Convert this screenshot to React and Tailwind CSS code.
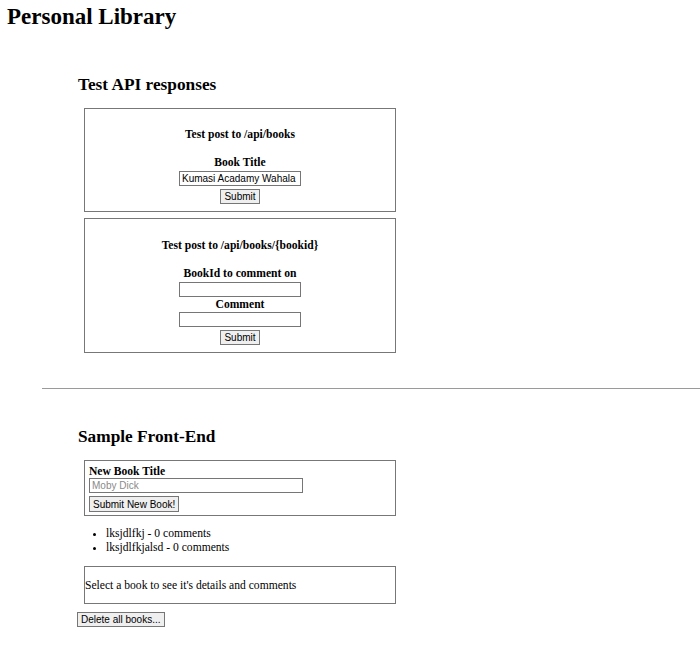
import { useState } from 'react';

const books = [
  { title: 'lksjdlfkj', commentcount: 0 },
  { title: 'lksjdlfkjalsd', commentcount: 0 },
];

const inputCls =
  "block h-[15px] border border-[#767676] bg-white px-[2px] text-[10px] leading-[13px] font-['Liberation_Sans',sans-serif] text-black outline-none placeholder:text-[#8a8a8a]";
const btnCls =
  "block h-[15px] border border-[#767676] bg-[#efefef] px-[3px] text-[10px] leading-[13px] font-['Liberation_Sans',sans-serif] text-black";

export default function App() {
  const [title, setTitle] = useState('Kumasi Acadamy Wahala');
  const [bookId, setBookId] = useState('');
  const [comment, setComment] = useState('');
  const [newTitle, setNewTitle] = useState('');

  return (
    <div className="min-h-[649px] bg-white text-black font-['Liberation_Serif','Times_New_Roman',serif] text-[11.6px]">
      <h1 className="pl-[7px] pt-[3px] text-[23px] font-bold leading-[27px]">Personal Library</h1>

      <div className="ml-[78px] mt-[44px]">
        <h2 className="text-[17.3px] font-bold leading-[21px]">Test API responses</h2>

        <div className="ml-[6px] mt-[13px] w-[312px]">
          <form className="flex flex-col items-center border border-[#777] pt-[19px] pb-[7px]" onSubmit={(e) => e.preventDefault()}>
            <h4 className="font-bold leading-[14px]">Test post to /api/books</h4>
            <label className="mt-[14px] font-bold leading-[14px]">Book Title</label>
            <input className={`${inputCls} mt-[1px] w-[122px]`} value={title} onChange={(e) => setTitle(e.target.value)} />
            <button className={`${btnCls} mt-[3px]`}>Submit</button>
          </form>

          <form className="mt-[6px] flex flex-col items-center border border-[#777] pt-[20px] pb-[7px]" onSubmit={(e) => e.preventDefault()}>
            <h4 className="font-bold leading-[14px]">Test post to /api/books/{'{bookid}'}</h4>
            <label className="mt-[14px] font-bold leading-[14px]">BookId to comment on</label>
            <input className={`${inputCls} mt-[1px] w-[122px]`} value={bookId} onChange={(e) => setBookId(e.target.value)} />
            <label className="mt-[1px] font-bold leading-[14px]">Comment</label>
            <input className={`${inputCls} w-[122px]`} value={comment} onChange={(e) => setComment(e.target.value)} />
            <button className={`${btnCls} mt-[3px]`}>Submit</button>
          </form>
        </div>
      </div>

      <hr className="ml-[42px] mt-[35px] border-0 border-t border-[#9a9a9a]" />

      <div className="ml-[78px] mt-[37px]">
        <h2 className="text-[17.3px] font-bold leading-[21px]">Sample Front-End</h2>

        <div className="ml-[6px] mt-[13px] w-[312px]">
          <form className="border border-[#777] px-[4px] pt-[4px] pb-[3px]" onSubmit={(e) => e.preventDefault()}>
            <label className="block font-bold leading-[13px]">New Book Title</label>
            <input className={`${inputCls} w-[214px]`} placeholder="Moby Dick" value={newTitle} onChange={(e) => setNewTitle(e.target.value)} />
            <button className={`${btnCls} mt-[3px] h-[16px]`}>Submit New Book!</button>
          </form>

          <ul className="mt-[11px] list-disc pl-[22px] leading-[14px]">
            {books.map((b) => (
              <li key={b.title}>
                {b.title} - {b.commentcount} comments
              </li>
            ))}
          </ul>

          <div className="mt-[11px] h-[38px] border border-[#777] pt-[12px] leading-[14px]">
            Select a book to see it's details and comments
          </div>
        </div>

        <button className={`${btnCls} -ml-[1px] mt-[8px]`}>Delete all books...</button>
      </div>
    </div>
  );
}
